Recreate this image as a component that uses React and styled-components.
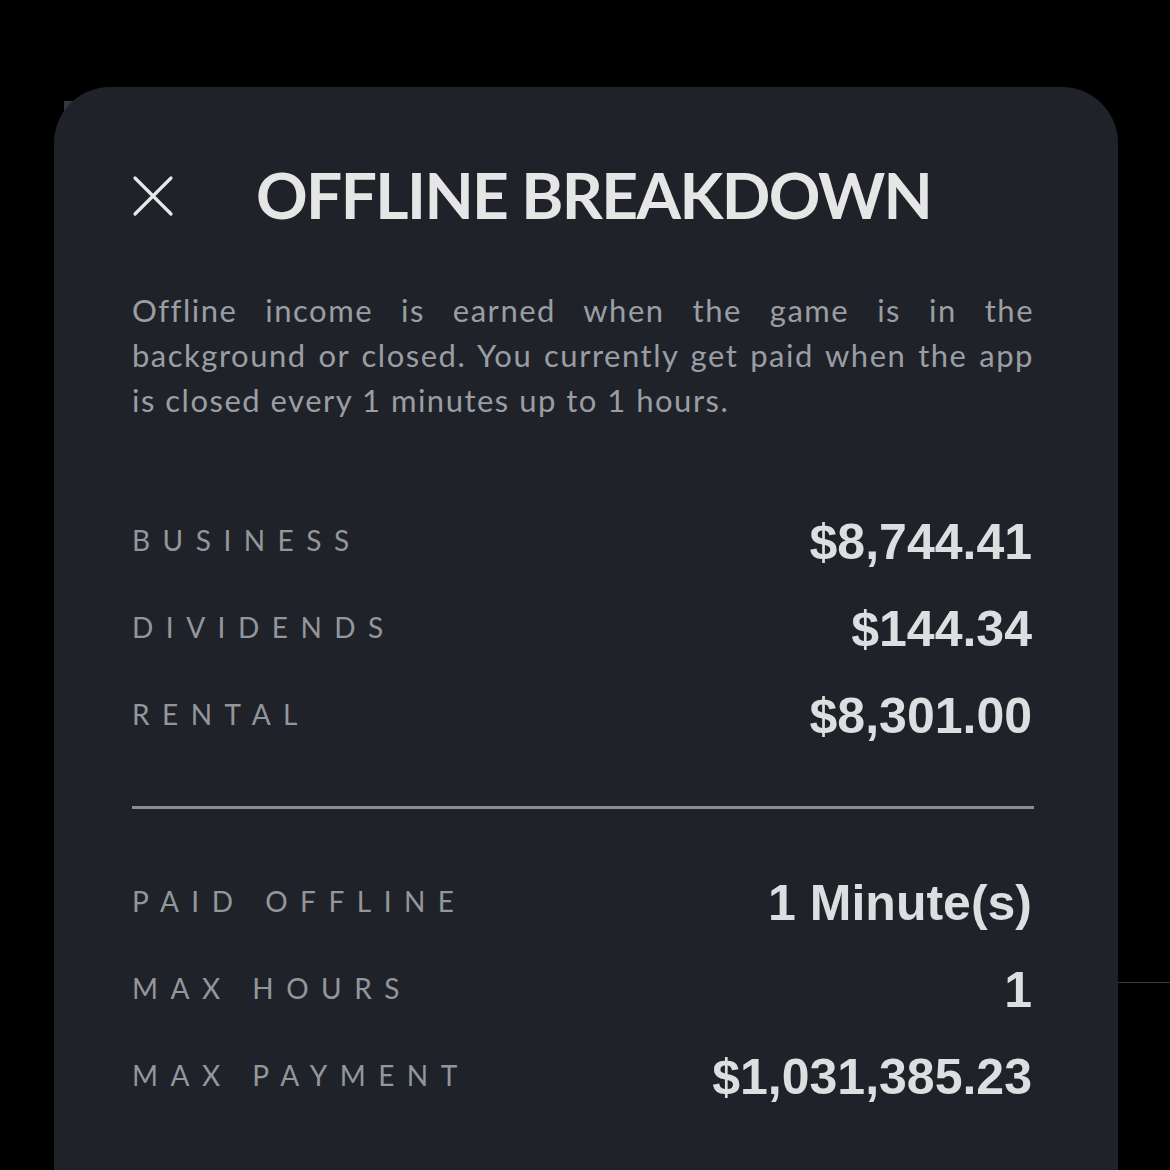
import React from "react";
import styled, { createGlobalStyle } from "styled-components";

const GlobalStyle = createGlobalStyle`
  html, body {
    margin: 0;
    padding: 0;
    background: #000;
  }
  body {
    width: 1170px;
    height: 1170px;
    overflow: hidden;
    font-family: "Lato", "Noto Sans", sans-serif;
  }
`;

const income = [
  { label: "BUSINESS", value: "$8,744.41" },
  { label: "DIVIDENDS", value: "$144.34" },
  { label: "RENTAL", value: "$8,301.00" }
];

const limits = [
  { label: "PAID OFFLINE", value: "1 Minute(s)" },
  { label: "MAX HOURS", value: "1" },
  { label: "MAX PAYMENT", value: "$1,031,385.23" }
];

const lines = [
  "Offline income is earned when the game is in the",
  "background or closed. You currently get paid when the app",
  "is closed every 1 minutes up to 1 hours."
];

function CloseIcon() {
  return (
    <svg width="42" height="42" viewBox="0 0 42 42" fill="none">
      <path
        d="M3 3 L39 39 M39 3 L3 39"
        stroke="#e8e8e9"
        strokeWidth="3.2"
        strokeLinecap="round"
      />
    </svg>
  );
}

export default function App() {
  return (
    <Screen>
      <GlobalStyle />
      <BackTab />
      <BackRule />
      <Sheet>
        <Header>
          <CloseButton aria-label="close">
            <CloseIcon />
          </CloseButton>
          <Title>OFFLINE BREAKDOWN</Title>
        </Header>
        <Intro>
          {lines.map((line, i) => (
            <IntroLine key={i} last={i === lines.length - 1}>
              {line}
            </IntroLine>
          ))}
        </Intro>
        <Group>
          {income.map(row => (
            <Row key={row.label}>
              <Label>{row.label}</Label>
              <Value>{row.value}</Value>
            </Row>
          ))}
        </Group>
        <Divider />
        <Group>
          {limits.map(row => (
            <Row key={row.label}>
              <Label>{row.label}</Label>
              <Value>{row.value}</Value>
            </Row>
          ))}
        </Group>
      </Sheet>
    </Screen>
  );
}

const Screen = styled.div`
  position: relative;
  width: 1170px;
  height: 1170px;
  padding: 87px 52px 0 54px;
  box-sizing: border-box;
  background: #000;
  overflow: hidden;
`;

const BackTab = styled.div`
  position: absolute;
  top: 101px;
  left: 64px;
  width: 9px;
  height: 18px;
  background: #34373b;
  z-index: 0;
`;

const BackRule = styled.div`
  position: absolute;
  top: 982px;
  left: 1110px;
  right: 0;
  height: 1px;
  background: #3a3b3d;
  z-index: 0;
`;

const Sheet = styled.div`
  position: relative;
  z-index: 1;
  height: 1200px;
  background: #1f2329;
  border-radius: 56px 56px 0 0;
  padding: 69px 84px 0 78px;
  box-sizing: border-box;
`;

const Header = styled.div`
  display: flex;
  align-items: center;
  height: 80px;
  gap: 82px;
`;

const CloseButton = styled.div`
  display: flex;
  align-items: center;
  justify-content: center;
  width: 42px;
  height: 42px;
`;

const Title = styled.h1`
  margin: 0;
  font-family: "Lato", sans-serif;
  font-weight: 700;
  font-size: 64px;
  letter-spacing: -1.6px;
  line-height: 1;
  color: #e6e6e7;
  white-space: nowrap;
  transform: translateY(-1px);
`;

const Intro = styled.div`
  margin-top: 52px;
  color: #9a9ea3;
  font-family: "Lato", sans-serif;
  font-size: 31px;
  letter-spacing: 1.5px;
  line-height: 45px;
`;

const IntroLine = styled.div`
  text-align: justify;
  text-align-last: ${props => (props.last ? "left" : "justify")};
  white-space: nowrap;
`;

const Group = styled.div`
  display: flex;
  flex-direction: column;
  margin-top: 73px;
  &:last-child {
    margin-top: 48px;
  }
`;

const Row = styled.div`
  display: flex;
  align-items: center;
  justify-content: space-between;
  height: 87px;
`;

const Label = styled.span`
  font-family: "Lato", sans-serif;
  font-size: 28px;
  letter-spacing: 12.5px;
  color: #93979c;
`;

const Value = styled.span`
  font-family: "Liberation Sans", Arial, sans-serif;
  font-weight: 700;
  font-size: 50px;
  color: #dddee0;
  margin-right: 2px;
  transform: translateY(2px);
`;

const Divider = styled.div`
  height: 3px;
  margin-top: 49px;
  background: #8a8d91;
`;
